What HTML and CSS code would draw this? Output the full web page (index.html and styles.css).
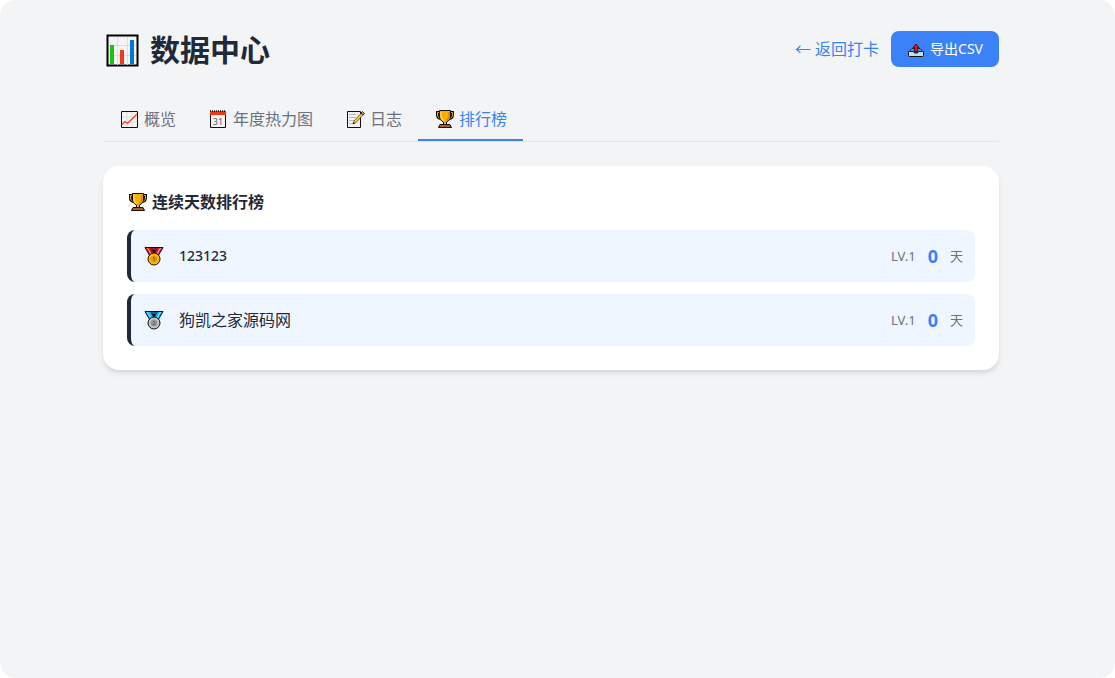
FILE: index.html
```html
<!DOCTYPE html>
<html lang="zh-CN">
<head>
    <meta charset="UTF-8">
    <meta name="viewport" content="width=device-width, initial-scale=1.0">
    <title>数据中心</title>
    <link rel="stylesheet" href="styles.css">
</head>
<body>
    <!-- 图标 -->
    <svg class="sprite" aria-hidden="true">
        <symbol id="trophy" viewBox="-1 0 21 20">
            <path d="M5 3.500H2.500V6c0 2 1.500 3.300 3.500 3.500M15 3.500h2.500V6c0 2-1.500 3.300-3.500 3.500" fill="none" stroke="#111" stroke-width="3"/>
            <path d="M5 3.500H2.500V6c0 2 1.500 3.300 3.500 3.500M15 3.500h2.500V6c0 2-1.500 3.300-3.500 3.500" fill="none" stroke="#f0a80a" stroke-width="1"/>
            <path d="M4.500 1.500h11V7c0 3-1.500 5-4 6v3h-3v-3c-2.500-1-4-3-4-6z" fill="#f7af00" stroke="#111"/>
            <path d="M6 3v4c0 2 1 3.500 2.500 4.500" fill="none" stroke="#ffd45a" stroke-width="1.500"/>
            <path d="M14 3v4c0 2-.8 3.500-2.500 4.500" fill="none" stroke="#d28a00" stroke-width="1.500"/>
            <path d="M5 15.500h10l1.500 3h-13z" fill="#a95f25" stroke="#111"/>
        </symbol>
    </svg>

    <div class="container">
        <div class="header">
            <h1>
                <svg class="icon-title" viewBox="0 0 34 34" aria-hidden="true">
                    <path d="M1.500 2.500h30v30h-30z" fill="#f5f5f5" stroke="#000" stroke-width="2"/>
                    <path d="M11.500 4v28M21.500 4v28M3 12.500h27M3 22.500h27" stroke="#ddd"/>
                    <path d="M4 12h4v19H4z" fill="#16c60c"/>
                    <path d="M14 17h4v14h-4z" fill="#f03a17"/>
                    <path d="M24 7h4v24h-4z" fill="#0078d7"/>
                </svg>
                <span>数据中心</span>
            </h1>
            <div class="actions">
                <a href="#" class="back-link">← 返回打卡</a>
                <button type="button" class="export-btn">
                    <svg class="icon-small" viewBox="0 0 18 18" aria-hidden="true">
                        <path d="M5 8.500h8l3.500 3.500h-15z" fill="#3a96dd" stroke="#111" stroke-width=".8"/>
                        <path d="M2.500 11.500h4l1 1.500h3l1-1.500h4q1 0 1 1v3q0 1-1 1h-13q-1 0-1-1v-3q0-1 1-1z" fill="#b8e0f8" stroke="#111"/>
                        <path d="M9 4l3 3.500h-1.500v4h-3v-4H6z" fill="#e81224" stroke="#111" stroke-width=".8"/>
                    </svg>
                    <span>导出CSV</span>
                </button>
            </div>
        </div>

        <!-- 标签页 -->
        <div class="tabs">
            <button type="button" class="tab">
                <svg class="icon" viewBox="-1 0 21 20" aria-hidden="true">
                    <path d="M1.500 2.500h16v16h-16z" fill="#f5f5f5" stroke="#111"/>
                    <path d="M7 3v15M12 3v15M2 8h15M2 13h15" stroke="#ddd"/>
                    <path d="M2 15.500l3-3 2.500 2L17 5" fill="none" stroke="#f03a17" stroke-width="1.300"/>
                </svg>
                <span>概览</span>
            </button>
            <button type="button" class="tab">
                <svg class="icon" viewBox="-1 0 21 20" aria-hidden="true">
                    <path d="M1.500 2.500h15v16h-15z" fill="#f5f5f5" stroke="#111"/>
                    <path d="M1 2h16v4H1z" fill="#f03a17"/>
                    <path d="M1 2h16" stroke="#111" stroke-width="1.500" stroke-dasharray="1 1"/>
                    <text x="9" y="16" text-anchor="middle" class="calendar-day">31</text>
                </svg>
                <span>年度热力图</span>
            </button>
            <button type="button" class="tab">
                <svg class="icon" viewBox="-1 0 21 20" aria-hidden="true">
                    <path d="M1.500 2.500h13v16h-13z" fill="#f2f2f2" stroke="#111"/>
                    <path d="M3 5.500h7M3 8.500h7M3 11.500h5M3 14.500h4" stroke="#bbb"/>
                    <path d="M7 15l1-3 7.500-8 2 1.500-7.500 8z" fill="#ffc83d" stroke="#111" stroke-width=".6"/>
                    <path d="M15 4l1.500-1.500 2 2L17 6z" fill="#f08080" stroke="#111" stroke-width=".8"/>
                    <path d="M7 15l.6-2 1.400 1.200z" fill="#111"/>
                </svg>
                <span>日志</span>
            </button>
            <button type="button" class="tab active">
                <svg class="icon" aria-hidden="true"><use href="#trophy"/></svg>
                <span>排行榜</span>
            </button>
        </div>

        <!-- 排行榜 -->
        <div class="card">
            <h2>
                <svg class="icon" aria-hidden="true"><use href="#trophy"/></svg>
                <span>连续天数排行榜</span>
            </h2>
            <div class="rank-list">
                <div class="rank-item">
                    <svg class="medal" viewBox="-1 0 21 20" aria-hidden="true">
                        <path d="M1 1.500h18L13.500 11h-7z" fill="#a4101c" stroke="#111"/>
                        <path d="M2 2h4l4 7-3 1.500zM18 2h-4l-4 7 3 1.500z" fill="#e81224"/>
                        <path d="M3.500 2l4 7M16.500 2l-4 7" stroke="#f6d0d0" stroke-width="1"/>
                        <path d="M8 4h4l-2 3.500z" fill="#111"/>
                        <circle cx="10" cy="13" r="6" fill="#ffb900" stroke="#111"/>
                        <circle cx="10" cy="13" r="3.500" fill="#e69b00"/>
                        <path d="M9 12l1.200-.8v4" fill="none" stroke="#8a5a00"/>
                    </svg>
                    <span class="name latin">123123</span>
                    <span class="level">LV.1</span>
                    <span class="days">0</span>
                    <span class="unit">天</span>
                </div>
                <div class="rank-item">
                    <svg class="medal" viewBox="-1 0 21 20" aria-hidden="true">
                        <path d="M1 1.500h18L13.500 11h-7z" fill="#0063b1" stroke="#111"/>
                        <path d="M2 2h4l4 7-3 1.500zM18 2h-4l-4 7 3 1.500z" fill="#20b8ec"/>
                        <path d="M3.500 2l4 7M16.500 2l-4 7" stroke="#8ceaff" stroke-width="1"/>
                        <path d="M8 4h4l-2 3.500z" fill="#111"/>
                        <circle cx="10" cy="13" r="6" fill="#c4c4c4" stroke="#111"/>
                        <circle cx="10" cy="13" r="3.500" fill="#999"/>
                        <path d="M8.800 12c.8-1 2.400-.6 2.200.4-.1.800-1.500 1.200-2.200 2.200h2.600" fill="none" stroke="#555" stroke-width=".8"/>
                    </svg>
                    <span class="name">狗凯之家源码网</span>
                    <span class="level">LV.1</span>
                    <span class="days">0</span>
                    <span class="unit">天</span>
                </div>
            </div>
        </div>
    </div>
</body>
</html>
```

FILE: styles.css
```css
* {
    box-sizing: border-box;
}

html {
    background-color: #ffffff;
}

body {
    margin: 0;
    min-height: 100vh;
    padding: 31px 13px 32px 0;
    border-radius: 16px;
    background-color: #f3f4f6;
    color: #1f2937;
    font-family: "Noto Sans", "Noto Sans CJK SC", sans-serif;
    font-size: 16px;
    line-height: 24px;
}

h1, h2 {
    display: flex;
    align-items: center;
    margin: 0;
}

button {
    border: none;
    background: none;
    font-family: inherit;
    cursor: pointer;
}

.sprite {
    display: none;
}

.container {
    max-width: 896px;
    margin: 0 auto;
}

.header {
    display: flex;
    justify-content: space-between;
    align-items: center;
    margin-bottom: 32px;
}

.header h1 {
    gap: 10px;
    padding-top: 2px;
    padding-left: 3px;
    font-size: 30px;
    line-height: 34px;
    font-weight: 700;
}

.icon-title {
    width: 34px;
    height: 34px;
}

.icon {
    width: 21px;
    height: 20px;
}

.icon-small {
    width: 18px;
    height: 18px;
}

.actions {
    display: flex;
    align-items: center;
    gap: 12px;
}

.back-link {
    color: #3b82f6;
    text-decoration: none;
}

.export-btn {
    display: flex;
    align-items: center;
    gap: 5px;
    padding: 8px 16px;
    border-radius: 8px;
    background-color: #3b82f6;
    color: #ffffff;
    font-size: 14px;
    line-height: 20px;
}

/* Tabs */
.tabs {
    display: flex;
    margin-bottom: 24px;
    border-bottom: 1px solid #e5e7eb;
}

.tab {
    display: flex;
    align-items: center;
    gap: 4px;
    padding: 8px 16px;
    border-bottom: 2px solid transparent;
    color: #6b7280;
    font-size: 16px;
    line-height: 24px;
}

.tab.active {
    border-bottom-color: #3b82f6;
    color: #3b82f6;
}

.calendar-day {
    fill: #555555;
    font-size: 9px;
}

/* Ranking card */
.card {
    padding: 24px;
    border-radius: 16px;
    background-color: #ffffff;
    box-shadow: 0 4px 6px -1px rgba(0, 0, 0, 0.1), 0 2px 4px -2px rgba(0, 0, 0, 0.1);
}

.card h2 {
    gap: 4px;
    margin-bottom: 16px;
    font-size: 16px;
    line-height: 24px;
    font-weight: 700;
}

.rank-list {
    display: flex;
    flex-direction: column;
    gap: 12px;
}

.rank-item {
    display: flex;
    align-items: center;
    gap: 12px;
    padding: 12px;
    border-left: 4px solid #1f2937;
    border-radius: 8px;
    background-color: #eff6ff;
    line-height: 28px;
}

.medal {
    width: 21px;
    height: 20px;
    margin-right: 3px;
}

.name {
    flex: 1;
}

.name.latin {
    font-size: 14px;
    font-weight: 500;
}

.level, .unit {
    color: #6b7280;
    font-size: 13px;
}

.days {
    color: #3b82f6;
    font-size: 18px;
    font-weight: 700;
}
```
